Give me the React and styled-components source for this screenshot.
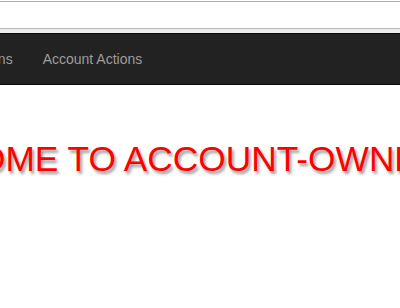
import React from "react";
import styled, { createGlobalStyle } from "styled-components";

const GlobalStyle = createGlobalStyle`
  html, body {
    margin: 0;
    padding: 0;
    background: #fff;
    overflow: hidden;
  }
  body {
    font-family: "Liberation Sans", Arial, sans-serif;
    font-size: 14px;
    line-height: 1.42857;
    color: #333;
  }
`;

const Page = styled.div`
  width: 400px;
  height: 308px;
  overflow: hidden;
`;

const AddressBar = styled.div`
  margin-top: 1px;
  height: 26px;
  border-top: 1px solid #acacac;
  border-bottom: 1px solid #b9b9b9;
  background: #fff;
`;

const Strip = styled.div`
  height: 4px;
  background: #ececec;
`;

const Navbar = styled.nav`
  min-height: 50px;
  background: #222;
  border-top: 1px solid #080808;
  border-bottom: 1px solid #080808;
  display: flex;
  overflow: hidden;
`;

const NavList = styled.ul`
  display: flex;
  list-style: none;
  margin: 0 0 0 -82px;
  padding: 0;
  white-space: nowrap;
`;

const NavLink = styled.a`
  display: block;
  padding: 15px;
  line-height: 20px;
  color: #9d9d9d;
  text-decoration: none;
  font-size: 14px;
`;

const Main = styled.main`
  padding-top: 54px;
  overflow: hidden;
`;

const Heading = styled.h1`
  margin: 0 0 0 -124px;
  font-size: 35.3px;
  font-weight: 500;
  line-height: 40px;
  color: #ff0000;
  white-space: nowrap;
  text-shadow: 2px 3px 3px #9a9a9a;
`;

export default function App() {
  return (
    <>
      <GlobalStyle />
      <Page>
        <AddressBar />
        <Strip />
        <Navbar>
          <NavList>
            <li>
              <NavLink href="#">Transactions</NavLink>
            </li>
            <li>
              <NavLink href="#">Account Actions</NavLink>
            </li>
          </NavList>
        </Navbar>
        <Main>
          <Heading>WELCOME TO ACCOUNT-OWNER</Heading>
        </Main>
      </Page>
    </>
  );
}
